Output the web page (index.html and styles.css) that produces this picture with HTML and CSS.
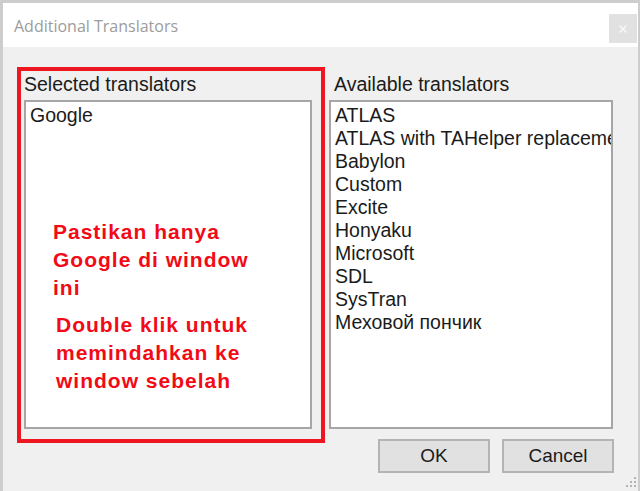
FILE: index.html
```html
<!DOCTYPE html>
<html lang="id">
<head>
<meta charset="utf-8">
<title>Additional Translators</title>
<link rel="stylesheet" href="styles.css">
</head>
<body>
<div class="dialog">
  <header class="titlebar">
    <span class="title">Additional Translators</span>
    <button class="close" aria-label="Close">
      <svg width="10" height="10" viewBox="0 0 10 10"><path d="M1.5 1.5 L8.5 8.5 M8.5 1.5 L1.5 8.5" stroke="#f7f7f7" stroke-width="1.6" fill="none"/></svg>
    </button>
  </header>
  <main class="content">
    <section class="col col-left highlight">
      <div class="label">Selected translators</div>
      <div class="listbox listbox-left">
        <div class="item">Google</div>
        <div class="notes">
          <p class="note">Pastikan hanya<br>Google di window<br>ini</p>
          <p class="note note-second">Double klik untuk<br>memindahkan ke<br>window sebelah</p>
        </div>
      </div>
    </section>
    <section class="col col-right">
      <div class="label label-right">Available translators</div>
      <div class="listbox listbox-right">
        <div class="item">ATLAS</div>
        <div class="item">ATLAS with TAHelper replacements</div>
        <div class="item">Babylon</div>
        <div class="item">Custom</div>
        <div class="item">Excite</div>
        <div class="item">Honyaku</div>
        <div class="item">Microsoft</div>
        <div class="item">SDL</div>
        <div class="item">SysTran</div>
        <div class="item">Меховой пончик</div>
      </div>
      <div class="buttons">
        <button class="btn">OK</button>
        <button class="btn">Cancel</button>
      </div>
    </section>
  </main>
  <div class="grip">
    <svg width="12" height="12" viewBox="0 0 12 12">
      <rect x="9" y="0" width="2" height="2" fill="#b4b4b4"/>
      <rect x="5" y="4" width="2" height="2" fill="#b4b4b4"/>
      <rect x="9" y="4" width="2" height="2" fill="#b4b4b4"/>
      <rect x="1" y="8" width="2" height="2" fill="#b4b4b4"/>
      <rect x="5" y="8" width="2" height="2" fill="#b4b4b4"/>
      <rect x="9" y="8" width="2" height="2" fill="#b4b4b4"/>
    </svg>
  </div>
</div>
</body>
</html>
```
FILE: styles.css
```css
html, body {
  margin: 0;
  height: 100%;
}
body {
  background: #cdcdcd;
  padding: 3px 2px 0 3px;
  box-sizing: border-box;
  overflow: hidden;
  font-family: "Liberation Sans", Arial, sans-serif;
  color: #1b1b1b;
}
.dialog {
  width: 635px;
  height: 488px;
  background: #f0f0f0;
  display: flex;
  flex-direction: column;
  position: relative;
}
.titlebar {
  height: 44px;
  flex: none;
  background: #ffffff;
  display: flex;
  align-items: flex-start;
  justify-content: space-between;
}
.title {
  font-family: "Open Sans", "Noto Sans", sans-serif;
  font-size: 16px;
  line-height: 24px;
  color: #9c9c9c;
  margin: 11px 0 0 11px;
}
.close {
  width: 28px;
  height: 29px;
  margin: 11px 1px 0 0;
  padding: 0;
  border: none;
  background: #e1e1e1;
  display: flex;
  align-items: center;
  justify-content: center;
}
.content {
  flex: 1;
  display: flex;
  align-items: flex-start;
  padding: 20px 0 0 14px;
}
.col {
  display: flex;
  flex-direction: column;
  box-sizing: border-box;
}
.highlight {
  width: 308px;
  height: 376px;
  border: 4px solid #ee1620;
  padding: 2px 9px 10px 3px;
}
.label {
  font-size: 19.5px;
  line-height: 23px;
  height: 23px;
  margin-bottom: 4px;
  white-space: nowrap;
}
.label-right {
  padding-left: 5px;
}
.listbox {
  background: #ffffff;
  border: 2px solid #a6a6a6;
  padding: 2px 0 0 4px;
  box-sizing: border-box;
  height: 329px;
  overflow: hidden;
  position: relative;
}
.listbox-left {
  width: 288px;
}
.listbox-right {
  width: 284px;
}
.item {
  font-size: 19.5px;
  line-height: 23px;
  white-space: nowrap;
}
.notes {
  position: absolute;
  top: 116px;
  left: 27px;
}
.note {
  margin: 0;
  font-weight: bold;
  font-size: 21px;
  line-height: 28px;
  letter-spacing: 1px;
  color: #f20a16;
  white-space: nowrap;
}
.note-second {
  margin: 9px 0 0 3px;
}
.col-right {
  width: 285px;
  margin-left: 4px;
  padding-top: 6px;
}
.buttons {
  display: flex;
  justify-content: flex-end;
  gap: 12px;
  margin-top: 10px;
}
.btn {
  width: 112px;
  height: 34px;
  box-sizing: border-box;
  background: #e1e1e1;
  border: 2px solid #b4b4b4;
  font-family: "Liberation Sans", Arial, sans-serif;
  font-size: 19px;
  color: #1b1b1b;
  padding: 0;
}
.grip {
  position: absolute;
  right: 1px;
  bottom: 2px;
  width: 12px;
  height: 12px;
  line-height: 0;
}
```
